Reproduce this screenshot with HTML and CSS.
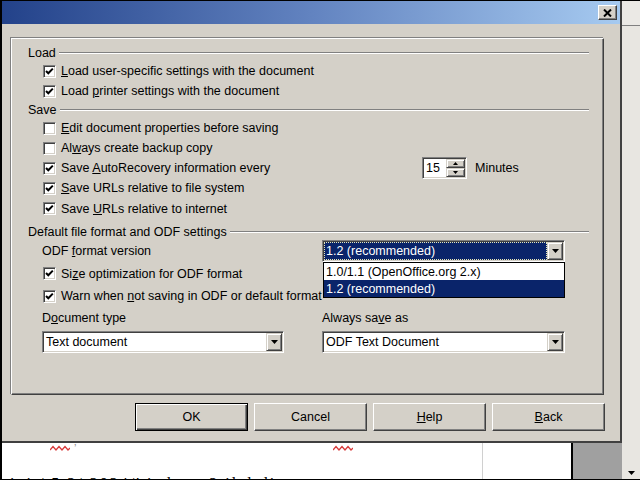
FILE: index.html
```html
<!DOCTYPE html>
<html>
<head>
<meta charset="utf-8">
<link rel="stylesheet" href="styles.css">
</head>
<body>
<div class="screen">
  <div class="main">
    <div class="dialog">
      <div class="titlebar">
        <div class="close"><svg width="9" height="8" viewBox="0 0 9 8"><path d="M1 0.5 L8 7.5 M8 0.5 L1 7.5" stroke="#000" stroke-width="2"/></svg></div>
      </div>
      <div class="body">
        <div class="frame">
          <div class="sec"><span>Load</span></div>
          <div class="row"><span class="box"><svg width="11" height="11" viewBox="0 0 11 11"><path d="M2 5 L4.3 7.3 L8.8 2.6" fill="none" stroke="#000" stroke-width="2"/></svg></span><span><u>L</u>oad user-specific settings with the document</span></div>
          <div class="row"><span class="box"><svg width="11" height="11" viewBox="0 0 11 11"><path d="M2 5 L4.3 7.3 L8.8 2.6" fill="none" stroke="#000" stroke-width="2"/></svg></span><span>Load <u>p</u>rinter settings with the document</span></div>
          <div class="sec"><span>Save</span></div>
          <div class="row"><span class="box"></span><span><u>E</u>dit document properties before saving</span></div>
          <div class="row"><span class="box"></span><span>Al<u>w</u>ays create backup copy</span></div>
          <div class="row">
            <div class="check"><span class="box"><svg width="11" height="11" viewBox="0 0 11 11"><path d="M2 5 L4.3 7.3 L8.8 2.6" fill="none" stroke="#000" stroke-width="2"/></svg></span><span>Save <u>A</u>utoRecovery information every</span></div>
            <div class="spin">
              <span class="spin-val">15</span>
              <span class="spin-btns">
                <span class="sb"><svg width="5" height="3" viewBox="0 0 5 3"><path d="M2.5 0 L5 3 L0 3 Z" fill="#000"/></svg></span>
                <span class="sb"><svg width="5" height="3" viewBox="0 0 5 3"><path d="M0 0 L5 0 L2.5 3 Z" fill="#000"/></svg></span>
              </span>
            </div>
            <span class="minutes">Minutes</span>
          </div>
          <div class="row"><span class="box"><svg width="11" height="11" viewBox="0 0 11 11"><path d="M2 5 L4.3 7.3 L8.8 2.6" fill="none" stroke="#000" stroke-width="2"/></svg></span><span><u>S</u>ave URLs relative to file system</span></div>
          <div class="row h21"><span class="box"><svg width="11" height="11" viewBox="0 0 11 11"><path d="M2 5 L4.3 7.3 L8.8 2.6" fill="none" stroke="#000" stroke-width="2"/></svg></span><span>Save <u>U</u>RLs relative to internet</span></div>
          <div class="sec sec-gap"><span>Default file format and ODF settings</span></div>
          <div class="pair">
            <span class="lbl">ODF <u>f</u>ormat version</span>
            <div class="select">
              <span class="val hl">1.2 (recommended)</span>
              <span class="drop"><svg width="7" height="4" viewBox="0 0 7 4"><path d="M0 0 L7 0 L3.5 4 Z" fill="#000"/></svg></span>
              <div class="list">
                <div class="opt">1.0/1.1 (OpenOffice.org 2.x)</div>
                <div class="opt sel">1.2 (recommended)</div>
              </div>
            </div>
          </div>
          <div class="row h23"><span class="box"><svg width="11" height="11" viewBox="0 0 11 11"><path d="M2 5 L4.3 7.3 L8.8 2.6" fill="none" stroke="#000" stroke-width="2"/></svg></span><span>Si<u>z</u>e optimization for ODF format</span></div>
          <div class="row h22"><span class="box"><svg width="11" height="11" viewBox="0 0 11 11"><path d="M2 5 L4.3 7.3 L8.8 2.6" fill="none" stroke="#000" stroke-width="2"/></svg></span><span class="nowrap">Warn when <u>n</u>ot saving in ODF or default format</span></div>
          <div class="pair">
            <span class="lbl">D<u>o</u>cument type</span>
            <span class="lbl">Always sa<u>v</u>e as</span>
          </div>
          <div class="pair pair-combo">
            <div class="select">
              <span class="val">Text document</span>
              <span class="drop"><svg width="7" height="4" viewBox="0 0 7 4"><path d="M0 0 L7 0 L3.5 4 Z" fill="#000"/></svg></span>
            </div>
            <div class="select">
              <span class="val">ODF Text Document</span>
              <span class="drop"><svg width="7" height="4" viewBox="0 0 7 4"><path d="M0 0 L7 0 L3.5 4 Z" fill="#000"/></svg></span>
            </div>
          </div>
        </div>
        <div class="buttons">
          <div class="btn def">OK</div>
          <div class="btn">Cancel</div>
          <div class="btn"><span><u>H</u>elp</span></div>
          <div class="btn"><span><u>B</u>ack</span></div>
        </div>
      </div>
    </div>
    <div class="doc">
      <div class="page">
        <svg class="squig s1" width="20" height="6" viewBox="0 0 20 6"><polyline points="0,5 3,1.5 6,5 9,1.5 12,5 15,1.5 18,5 20,3" fill="none" stroke="#d83a3a" stroke-width="1.3"/></svg>
        <span class="tick">’</span>
        <svg class="squig s2" width="20" height="6" viewBox="0 0 20 6"><polyline points="0,5 3,1.5 6,5 9,1.5 12,5 15,1.5 18,5 20,3" fill="none" stroke="#d83a3a" stroke-width="1.3"/></svg>
        <div class="ptext">ini / 5.2/.2024/' ieda ta 2 ilal dia</div>
      </div>
      <div class="gut"></div>
      <div class="marg"></div>
      <div class="edge"></div>
      <div class="gray"></div>
    </div>
  </div>
  <div class="vscroll">
    <div class="vtop"></div>
    <div class="vfill"></div>
    <div class="vdown"><svg width="7" height="4" viewBox="0 0 7 4"><path d="M0 0 L7 0 L3.5 4 Z" fill="#000"/></svg></div>
  </div>
</div>
</body>
</html>
```

FILE: styles.css
```css
* { box-sizing: border-box; }
html, body { margin: 0; padding: 0; }
body {
  width: 640px;
  height: 480px;
  overflow: hidden;
  font-family: "Liberation Sans", Arial, sans-serif;
  font-size: 12.5px;
  color: #000;
}
.screen {
  display: flex;
  width: 640px;
  height: 480px;
  border-top: 1px solid #000;
  border-left: 2px solid #000;
  border-bottom: 1px solid #000;
  background: #fff;
}
.main { flex: 1; min-width: 0; display: flex; flex-direction: column; }
.dialog {
  height: 442px;
  flex: none;
  background: #d4d0c8;
  border-right: 2px solid #404040;
  border-bottom: 2px solid #404040;
  display: flex;
  flex-direction: column;
}
.titlebar {
  height: 23px;
  flex: none;
  background: linear-gradient(90deg, #23428a 0%, #6283c0 50%, #a6caf0 100%);
  display: flex;
  justify-content: flex-end;
  align-items: center;
  padding-right: 3px;
}
.close {
  width: 19px;
  height: 15px;
  background: #d4d0c8;
  border: 1px solid;
  border-color: #fff #404040 #404040 #fff;
  box-shadow: inset -1px -1px #808080;
  display: flex;
  align-items: center;
  justify-content: center;
}
.body {
  flex: 1;
  padding: 14px 15px 0 9px;
  display: flex;
  flex-direction: column;
}
.frame {
  width: 593px;
  height: 357px;
  flex: none;
  border: 1px solid;
  border-color: #fff #404040 #404040 #fff;
  box-shadow: -1px -1px 0 #808080, inset -1px -1px 0 #808080;
  padding: 5px 14px 0 0;
}
.sec {
  display: flex;
  align-items: center;
  height: 17px;
  padding-left: 16px;
  gap: 3px;
  white-space: nowrap;
}
.sec::after {
  content: "";
  flex: 1;
  border-top: 1px solid #808080;
  border-bottom: 1px solid #fff;
}
.sec-gap { height: 21px; padding-top: 5px; }
.row {
  display: flex;
  align-items: center;
  height: 20px;
  padding-left: 31px;
  white-space: nowrap;
}
.row.h21 { height: 21px; }
.row.h22 { height: 22px; }
.row.h23 { height: 23px; }
.box {
  width: 13px;
  height: 13px;
  flex: none;
  background: #fff;
  border: 1px solid;
  border-color: #808080 #fff #fff #808080;
  box-shadow: inset 1px 1px #404040, inset -1px -1px #d4d0c8;
  margin-right: 5px;
  display: flex;
  align-items: center;
  justify-content: center;
}
.box svg { display: block; }
.check { display: flex; align-items: center; width: 379px; flex: none; }
.spin {
  display: flex;
  width: 45px;
  height: 22px;
  flex: none;
  border: 1px solid;
  border-color: #808080 #fff #fff #808080;
  box-shadow: inset 1px 1px #404040, inset -1px -1px #d4d0c8;
  padding: 1px;
  background: #fff;
}
.spin-val { flex: 1; padding-left: 2px; display: flex; align-items: center; }
.spin-btns { width: 19px; display: flex; flex-direction: column; }
.sb {
  flex: 1;
  background: #d4d0c8;
  border: 1px solid;
  border-color: #d4d0c8 #404040 #404040 #d4d0c8;
  box-shadow: inset 1px 1px #fff, inset -1px -1px #808080;
  display: flex;
  align-items: center;
  justify-content: center;
}
.sb svg { display: block; }
.minutes { margin-left: 8px; }
.pair {
  display: grid;
  grid-template-columns: 242px 243px;
  column-gap: 38px;
  padding-left: 30px;
  align-items: center;
  height: 22px;
  white-space: nowrap;
}
.pair-combo { margin-top: 2px; }
.select {
  position: relative;
  height: 22px;
  border: 1px solid;
  border-color: #808080 #fff #fff #808080;
  box-shadow: inset 1px 1px #404040, inset -1px -1px #d4d0c8;
  padding: 1px;
  background: #fff;
  display: flex;
}
.val {
  flex: 1;
  display: flex;
  align-items: center;
  padding-left: 2px;
  white-space: nowrap;
}
.hl {
  background: #0a246a;
  color: #fff;
  outline: 1px dotted #e8e8b8;
  outline-offset: -1px;
}
.drop {
  width: 16px;
  flex: none;
  background: #d4d0c8;
  border: 1px solid;
  border-color: #d4d0c8 #404040 #404040 #d4d0c8;
  box-shadow: inset 1px 1px #fff, inset -1px -1px #808080;
  display: flex;
  align-items: center;
  justify-content: center;
}
.drop svg { display: block; }
.list {
  position: absolute;
  z-index: 2;
  top: calc(100% + 1px);
  left: 0;
  right: -1px;
  background: #fff;
  border: 1px solid #000;
}
.opt {
  height: 17px;
  display: flex;
  align-items: center;
  padding-left: 2px;
  white-space: nowrap;
}
.opt.sel { background: #0a246a; color: #fff; }
.buttons {
  display: flex;
  justify-content: flex-end;
  gap: 6px;
  margin-top: 8px;
}
.btn {
  width: 113px;
  height: 28px;
  background: #d4d0c8;
  border: 1px solid;
  border-color: #fff #404040 #404040 #fff;
  box-shadow: inset -1px -1px #808080;
  display: flex;
  align-items: center;
  justify-content: center;
}
.btn.def {
  border-color: #000;
  box-shadow: inset 1px 1px #fff, inset -1px -1px #404040, inset -2px -2px #808080;
}
.doc { flex: 1; display: flex; min-height: 0; }
.page {
  width: 480px;
  flex: none;
  position: relative;
  overflow: hidden;
  padding: 32px 0 0 8px;
}
.squig { position: absolute; top: 2px; display: block; }
.s1 { left: 48px; }
.s2 { left: 331px; }
.tick {
  position: absolute;
  left: 72px;
  top: 0;
  color: #888;
  font-size: 11px;
  line-height: 11px;
}
.ptext {
  font-family: "Liberation Serif", serif;
  font-size: 16px;
  white-space: nowrap;
  letter-spacing: 2px;
}
.gut { width: 1px; flex: none; background: #d0d0d0; }
.marg { width: 88px; flex: none; background: #fff; }
.edge { width: 2px; flex: none; background: #000; }
.gray { flex: 1; background: #a0a0a0; }
.vscroll {
  width: 18px;
  flex: none;
  background: #e8e6e1;
  display: flex;
  flex-direction: column;
}
.vtop { height: 25px; border-bottom: 1px solid #808080; background: #ebe9e5; }
.vfill { flex: 1; }
.vdown { height: 13px; display: flex; align-items: center; justify-content: center; }
.vdown svg { display: block; }
```
